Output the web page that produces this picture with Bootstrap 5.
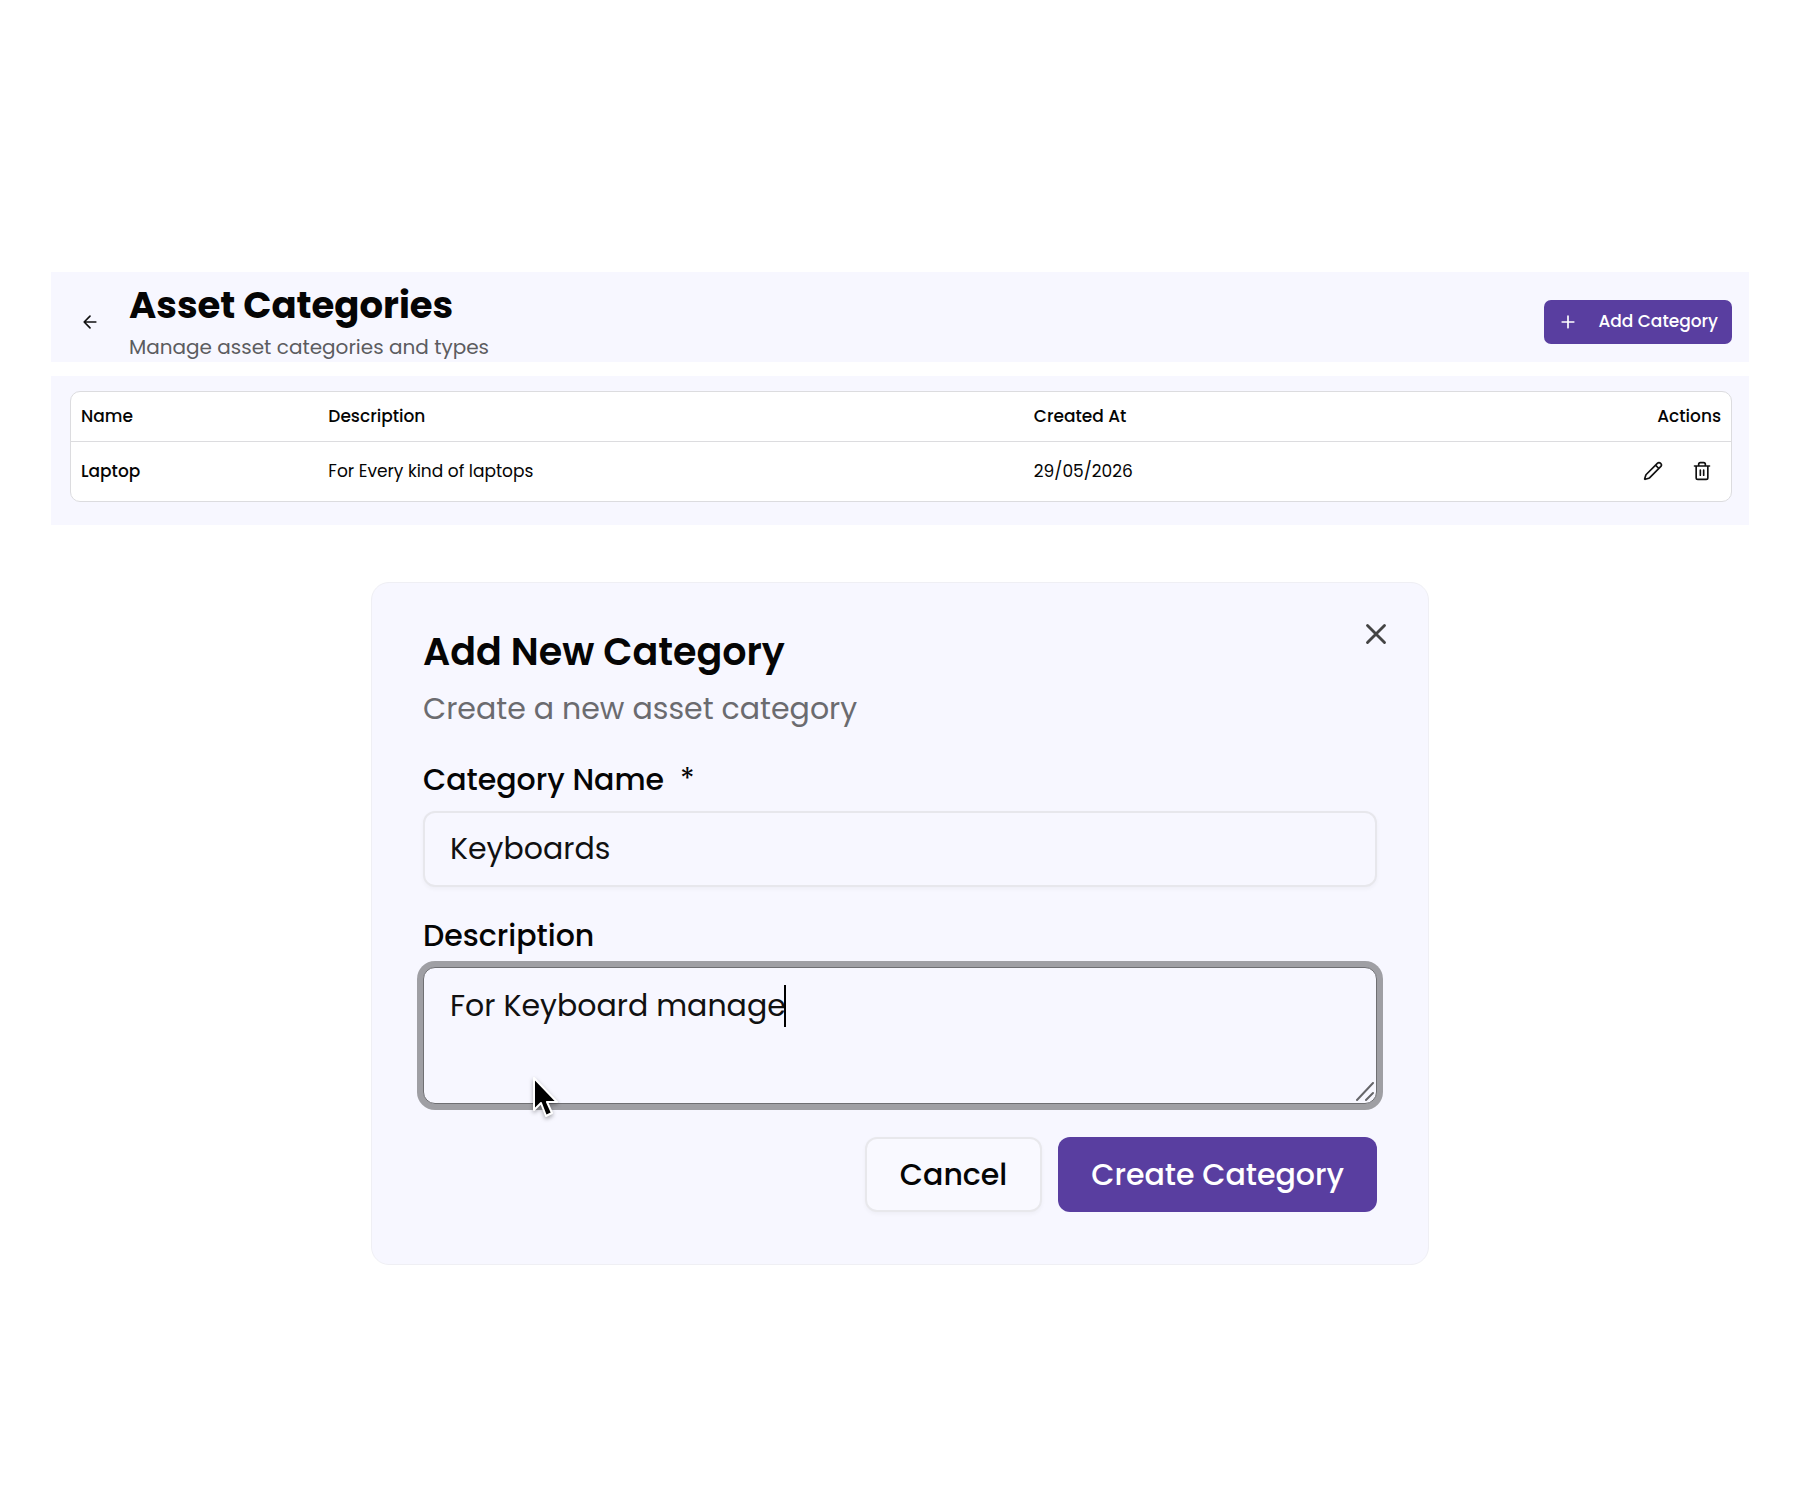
<!DOCTYPE html>
<html lang="en">
<head>
<meta charset="utf-8">
<meta name="viewport" content="width=device-width, initial-scale=1">
<title>Asset Categories</title>
<link href="https://cdn.jsdelivr.net/npm/bootstrap@5.3.0/dist/css/bootstrap.min.css" rel="stylesheet">
<style>
  :root { --panel: #f7f7ff; --brand: #593ea0; --line: #dcdcdf; }
  body { font-family: Poppins, Inter, "Noto Sans", sans-serif; color: #050505; background: #fff; font-size: 17px; line-height: 24px; }
  svg { display: block; fill: none; stroke: currentColor; stroke-width: 2; stroke-linecap: round; stroke-linejoin: round; }
  .page-wrap { padding: 272px 51px 64px; }
  .panel { background: var(--panel); }
  .page-head { padding: 11px 17px 0 20px; min-height: 90px; }
  .page-title { margin: 0 0 6px; font-size: 37px; line-height: 44px; font-weight: 700; }
  .page-sub { font-size: 20px; line-height: 28px; color: #5c5c60; }
  .icon-btn { width: 38px; height: 38px; padding: 0; border: 0; display: inline-flex; align-items: center; justify-content: center; color: #111; }
  .back-btn { margin-top: 20px; }
  .btn-brand, .btn-brand:hover { background: var(--brand); color: #fff; border: 0; }
  .add-btn { height: 44px; margin-top: 17px; padding: 0 14px; gap: 20px; font-size: 17px; font-weight: 500; border-radius: 7px; }
  .list-panel { margin-top: 14px; padding: 15px 17px 23px 19px; }
  .table-box { border: 1px solid var(--line); border-radius: 10px; overflow: hidden; background: #fff; }
  .asset-table { table-layout: fixed; color: inherit; }
  .asset-table > :not(caption) > * > * { padding: 0 10px; border-color: var(--line); vertical-align: middle; }
  .asset-table th { font-weight: 500; }
  .asset-table thead th { height: 49px; }
  .asset-table tbody tr > * { height: 60px; border-bottom: 0; }
  .col-name { width: 14.9%; } .col-desc { width: 42.5%; } .col-made { width: 22%; }
  .row-actions { gap: 11px; }
  .dialog-card { max-width: 1058px; margin: 57px auto 0; padding: 45px 51px 52px; border: 1px solid #efeff4; border-radius: 18px; background: var(--panel); position: relative; }
  .dialog-title { font-size: 38px; line-height: 48px; font-weight: 600; }
  .dialog-sub { margin: 11px 0 0; font-size: 30px; line-height: 44px; color: #6b6b6f; }
  .form-row { margin-top: 27px; }
  .field-label { display: block; margin-bottom: 9px; font-size: 30px; line-height: 44px; font-weight: 500; }
  .field, .field:focus { font-size: 30px; line-height: 44px; color: #111; background: var(--panel); border: 2px solid #e7e7ec; border-radius: 12px; padding: 14px 25px; box-shadow: 0 2px 4px #0000000a; }
  .field-active, .field-active:focus { border: 1px solid #6f6f73; padding: 16px 26px 0; box-shadow: 0 0 0 6px #9f9fa4; resize: none; height: 137px; }
  .dialog-actions { margin-top: 33px; }
  .dialog-btn { font-size: 30px; line-height: 44px; font-weight: 500; height: 75px; padding: 0 33px; border-radius: 12px; }
  .btn-plain, .btn-plain:hover { background: #f9f9ff; border: 2px solid #e8e8ec; color: #050505; box-shadow: 0 2px 4px #0000000a; }
  .dialog-close { position: absolute; top: 32px; right: 33px; color: #444; }
  .caret { position: absolute; left: 361px; top: 18px; width: 2px; height: 42px; background: #000; }
  .grip { position: absolute; right: 2px; bottom: 2px; stroke: #66666a; }
  .pointer { position: absolute; left: 108px; top: 110px; filter: drop-shadow(0 2px 2px #0005); pointer-events: none; }
</style>
<script src="https://cdn.jsdelivr.net/npm/bootstrap@5.3.0/dist/js/bootstrap.bundle.min.js"></script>
</head>
<body>
<main class="container-fluid page-wrap">
  <header class="panel page-head d-flex align-items-start justify-content-between">
    <div class="d-flex">
      <button type="button" class="btn icon-btn back-btn" aria-label="Back">
        <svg width="20" height="20" viewBox="0 0 24 24"><path d="m12 19-7-7 7-7M19 12H5"/></svg>
      </button>
      <div class="ms-3 ps-1">
        <h1 class="page-title">Asset Categories</h1>
        <p class="page-sub mb-0">Manage asset categories and types</p>
      </div>
    </div>
    <button type="button" class="btn btn-brand add-btn d-inline-flex align-items-center">
      <svg width="20" height="20" viewBox="0 0 24 24"><path d="M5 12h14M12 5v14"/></svg>
      Add Category
    </button>
  </header>

  <section class="panel list-panel">
    <div class="table-box">
      <table class="table asset-table mb-0">
        <thead>
          <tr>
            <th scope="col" class="col-name">Name</th>
            <th scope="col" class="col-desc">Description</th>
            <th scope="col" class="col-made">Created At</th>
            <th scope="col" class="text-end">Actions</th>
          </tr>
        </thead>
        <tbody>
          <tr>
            <th scope="row">Laptop</th>
            <td>For Every kind of laptops</td>
            <td>29/05/2026</td>
            <td>
              <div class="d-flex justify-content-end row-actions">
                <button type="button" class="btn icon-btn" aria-label="Edit">
                  <svg width="20" height="20" viewBox="0 0 24 24"><path d="M21.174 6.812a1 1 0 0 0-3.986-3.987L3.842 16.174a2 2 0 0 0-.5.83l-1.321 4.352a.5.5 0 0 0 .623.622l4.353-1.32a2 2 0 0 0 .83-.497zM15 5l4 4"/></svg>
                </button>
                <button type="button" class="btn icon-btn" aria-label="Delete">
                  <svg width="20" height="20" viewBox="0 0 24 24"><path d="M3 6h18M19 6v14a2 2 0 0 1-2 2H7a2 2 0 0 1-2-2V6M8 6V4a2 2 0 0 1 2-2h4a2 2 0 0 1 2 2v2M10 11v6M14 11v6"/></svg>
                </button>
              </div>
            </td>
          </tr>
        </tbody>
      </table>
    </div>
  </section>

  <section class="dialog-card" role="dialog" aria-labelledby="dialogTitle">
    <button type="button" class="btn icon-btn dialog-close" aria-label="Close">
      <svg width="34" height="34" viewBox="0 0 24 24"><path d="M18 6 6 18M6 6l12 12"/></svg>
    </button>
    <h2 class="dialog-title mb-0" id="dialogTitle">Add New Category</h2>
    <p class="dialog-sub">Create a new asset category</p>
    <form>
      <div class="form-row">
        <label class="field-label" for="catName">Category Name <span class="ms-2 fw-normal">*</span></label>
        <input class="form-control field" id="catName" type="text" value="Keyboards" required>
      </div>
      <div class="form-row">
        <label class="field-label" for="catDesc">Description</label>
        <div class="position-relative">
          <textarea class="form-control field field-active" id="catDesc">For Keyboard manage</textarea>
          <span class="caret"></span>
          <svg class="grip" width="20" height="20" viewBox="0 0 20 20"><path d="M2 18 18 1M11 18l7-7"/></svg>
          <svg class="pointer" width="32" height="44" viewBox="0 0 32 44"><path d="M3 1v32l7-7 5 13 6-3-5-11h10z" fill="#000" stroke="#fff"/></svg>
        </div>
      </div>
      <div class="d-flex justify-content-end gap-3 dialog-actions">
        <button type="button" class="btn btn-plain dialog-btn">Cancel</button>
        <button type="submit" class="btn btn-brand dialog-btn">Create Category</button>
      </div>
    </form>
  </section>
</main>
</body>
</html>
